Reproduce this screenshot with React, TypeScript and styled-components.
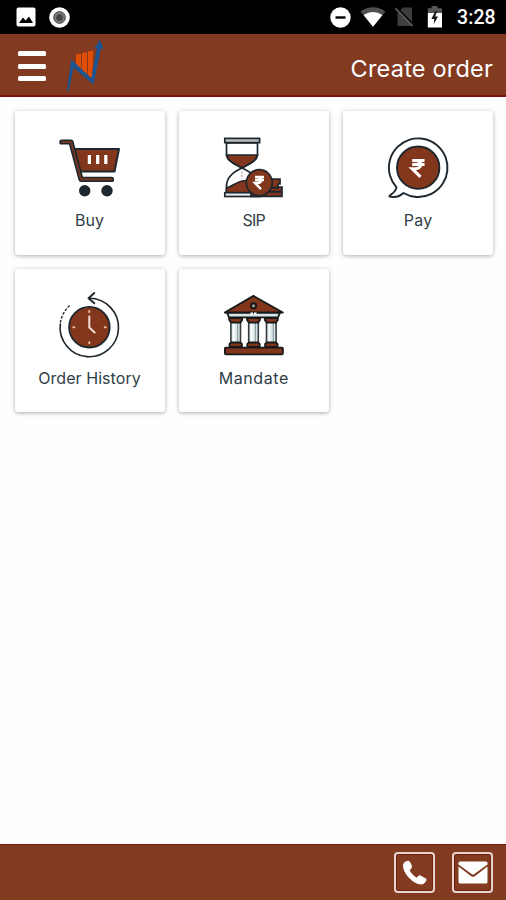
import React from "react";
import styled, { createGlobalStyle } from "styled-components";

const BROWN = "#823a20";
const RUST = "#82361b";
const INK = "#1d272d";

const GlobalStyle = createGlobalStyle`
  *, *::before, *::after { box-sizing: border-box; }
  body { margin: 0; background: #fefefe; }
`;

const Screen = styled.div`
  width: 506px;
  height: 900px;
  display: flex;
  flex-direction: column;
  overflow: hidden;
  background: #fefefe;
  font-family: Inter, "Open Sans", sans-serif;
`;

const StatusBar = styled.div`
  flex: none;
  height: 34px;
  padding: 0 10px 0 16px;
  display: flex;
  align-items: center;
  justify-content: space-between;
  background: #000;
`;

const StatusGroup = styled.div`
  display: flex;
  align-items: center;
`;

const StatusIcon = styled.svg<{ $gap: number }>`
  display: block;
  margin-right: ${(p) => p.$gap}px;
`;

const Clock = styled.span`
  width: 39px;
  color: #fff;
  font: 500 19.5px/34px Roboto, sans-serif;
  letter-spacing: 0.1px;
  white-space: nowrap;
  padding-top: 2px;
`;

const Header = styled.header`
  flex: none;
  height: 63px;
  padding: 0 13px 0 18px;
  display: flex;
  align-items: center;
  background: ${BROWN};
  border-bottom: 2px solid #77150f;
`;

const MenuButton = styled.button`
  width: 28px;
  height: 30px;
  margin-top: 3px;
  padding: 0;
  border: 0;
  background: none;
  display: flex;
  flex-direction: column;
  justify-content: space-between;
`;

const MenuLine = styled.span`
  height: 5px;
  border-radius: 1.5px;
  background: #fff;
`;

const Logo = styled.svg`
  display: block;
  margin-left: 20px;
`;

const Title = styled.h1`
  margin: 8px 0 0 auto;
  color: #fff;
  font-size: 23.5px;
  font-weight: 400;
  line-height: 32px;
  letter-spacing: 0.2px;
`;

const Grid = styled.main`
  flex: 1;
  display: grid;
  grid-template-columns: repeat(3, 150px);
  grid-template-rows: 144px 143px;
  align-content: start;
  column-gap: 14.3px;
  row-gap: 14px;
  padding: 14px 0 0 14.5px;
`;

const Card = styled.section`
  display: flex;
  flex-direction: column;
  align-items: center;
  padding-top: 26px;
  border-radius: 3px;
  background: #fff;
  box-shadow: 0 1px 4px rgba(0, 0, 0, 0.32);
`;

const CardIcon = styled.svg`
  display: block;
  flex: none;
  overflow: visible;
`;

const Label = styled.span<{ $spacing: number }>`
  margin-top: 11px;
  color: #304047;
  font-size: 16px;
  line-height: 24px;
  letter-spacing: ${(p) => p.$spacing}px;
`;

const Footer = styled.footer`
  flex: none;
  height: 56px;
  padding: 7px 13px 0 0;
  display: flex;
  justify-content: flex-end;
  gap: 17px;
  background: ${BROWN};
  border-top: 1px solid #74160f;
`;

const ContactButton = styled.button`
  width: 41px;
  height: 41px;
  padding: 0;
  border: 2px solid #e8d4cf;
  border-radius: 4px;
  background: ${BROWN};
  box-shadow: inset 0 0 0 1px #741d12;
  display: flex;
  align-items: center;
  justify-content: center;
`;

const RUPEE = "M0 1H12M0 5H12M0 1H3C10 1 10 9 3 9H0L8 17";

const CartArt = () => (
  <g strokeLinejoin="round" strokeLinecap="round">
    <path d="M14 12H59L54.5 34.5H20Z" fill={RUST} stroke={INK} strokeWidth="2" />
    <path d="M1.8 5H11L21 42.4H51.5" fill="none" stroke={INK} strokeWidth="5.2" />
    <path d="M1.8 5H11L21 42.4H51.5" fill="none" stroke="#713624" strokeWidth="2.1" />
    <path d="M29.4 19.5V25.3M37.7 19.5V25.3M45.8 19.5V25.3" stroke="#fff" strokeWidth="3.2" strokeLinecap="square" />
    <circle cx="24.7" cy="53.7" r="5.7" fill={INK} />
    <circle cx="47" cy="53.7" r="5.7" fill={INK} />
  </g>
);

const SipArt = () => (
  <g stroke={INK} strokeWidth="1.7">
    <path d="M2.5 6H33.5V17C33.5 24 25 27 18 31C11 27 2.5 24 2.5 17Z" fill="#fff" />
    <path d="M2.5 18H33.5C32.5 24 25 27 18 31C11 27 3.5 24 2.5 18Z" fill={RUST} />
    <path d="M18 31C9 35 2.5 40 2.5 49V56H34V48C34 40 27 35 18 31Z" fill="#fff" />
    <path d="M2.5 55V51C9 49 14 43.5 22 43.5L34 51V56H2.5Z" fill={RUST} />
    <path d="M18 34.5V42" stroke="#b5aca1" strokeDasharray="2 1.5" strokeWidth="1.3" />
    <rect x="0.8" y="1.4" width="34.8" height="4.2" fill="#b8bec1" />
    <rect x="0.8" y="55.7" width="35" height="3.8" fill="#e8edef" />
    <path d="M37 42H56V46.8H54V50H58V59.4H27V54H43V50H37Z" fill={RUST} />
    <path d="M43 50.8H55M45 54.8H58" strokeWidth="2" />
    <circle cx="35.3" cy="45.7" r="13" fill={RUST} />
    <path d={RUPEE} transform="translate(31 39.3) scale(.75)" fill="none" stroke="#fff" strokeWidth="3.2" />
  </g>
);

const PayArt = () => (
  <g stroke={INK} strokeWidth="1.9">
    <path
      d="M8.5 50.4A29.3 29.3 0 1 1 15.4 56C12 59.5 6 60.4 1.4 59.6C.5 58 7 57 8.5 50.4Z"
      fill="#fff"
      strokeLinejoin="round"
    />
    <circle cx="30.2" cy="30.7" r="21.2" fill={RUST} />
    <path d={RUPEE} transform="translate(24.2 22.4) scale(1.03)" fill="none" stroke="#fff" strokeWidth="3" />
  </g>
);

const HistoryArt = () => (
  <g fill="none" strokeLinecap="round" strokeLinejoin="round">
    <path d="M29.5 3.3A29.2 29.2 0 1 1 .3 29" stroke={INK} strokeWidth="1.6" />
    <path d="M.5 27A29.2 29.2 0 0 1 10.5 9.8" stroke={INK} strokeWidth="1.4" strokeDasharray="1.6 2.6" />
    <path d="M34.3-2L28.5 3.3L34.3 8.3" stroke={INK} strokeWidth="1.9" />
    <circle cx="29.4" cy="32.2" r="20.3" fill={RUST} stroke={INK} strokeWidth="1.8" />
    <path d="M29.3 21.5V32.5L34.7 37.5" stroke="#f2ded6" strokeWidth="2" />
    <path d="M29.3 16V17M29.3 47.3V48.3M13.3 32.2H14.3M44.7 32.2H45.7" stroke="#edbd9f" strokeWidth="2" />
  </g>
);

const MandateArt = () => (
  <g stroke="#17191b" strokeWidth="1.8" strokeLinejoin="round">
    <path d="M3 17.6H56L54 22.4H5Z" fill="#d9e6e8" />
    <path d="M29.5.9L58.8 17.5H.8Z" fill={RUST} />
    <circle cx="29.5" cy="10.8" r="2.6" fill="#a9998f" strokeWidth="2" />
    <path d="M26.5 18.3H32.5" stroke="#fff" strokeDasharray="2.5 1" />
    {[11.7, 29.5, 47.3].map((x) => (
      <g key={x} transform={`translate(${x} 0)`}>
        <rect x="-4.8" y="26" width="9.6" height="23" fill="#dce9eb" stroke="#343c40" strokeWidth="1.6" />
        <path d="M-1.9 28V47" stroke="#fff" strokeWidth="1.8" />
        <path d="M2 28V47" stroke="#8d9ea4" strokeWidth="1.2" />
        <path d="M-6.5 23.2H6.5V25L4.5 27.6H-4.5L-6.5 25Z" fill={RUST} />
        <path d="M-6.2 51.8V49L-4.4 47.5H4.4L6.2 49V51.8Z" fill={RUST} />
      </g>
    ))}
    <rect x="0.9" y="52.6" width="58" height="6.7" rx="1" fill={RUST} />
  </g>
);

const ACTIONS = [
  { label: "Buy", Art: CartArt, spacing: 0.1 },
  { label: "SIP", Art: SipArt, spacing: -0.7 },
  { label: "Pay", Art: PayArt, spacing: 0.2 },
  { label: "Order History", Art: HistoryArt, spacing: 0.07 },
  { label: "Mandate", Art: MandateArt, spacing: 0.55 },
];

export default function App() {
  return (
    <Screen>
      <GlobalStyle />
      <StatusBar>
        <StatusGroup>
          <StatusIcon $gap={13} width="20" height="20" viewBox="0 0 20 20">
            <rect x="0.5" y="0.5" width="19" height="19" rx="2" fill="#fff" />
            <path d="M3 16L7 10.5L9.5 13.5L13 9.5L17 16Z" fill="#000" />
          </StatusIcon>
          <StatusIcon $gap={0} width="21" height="21" viewBox="0 0 21 21">
            <circle cx="10.5" cy="10.5" r="10.3" fill="#fff" />
            <circle cx="10.5" cy="10.5" r="5.9" fill="#777" stroke="#555" strokeWidth="1" />
            <circle cx="10.5" cy="10.5" r="3.2" fill="#444" />
          </StatusIcon>
        </StatusGroup>
        <StatusGroup>
          <StatusIcon $gap={9} width="21" height="21" viewBox="0 0 21 21">
            <circle cx="10.5" cy="10.5" r="10.2" fill="#fff" />
            <path d="M5.5 10.5H15.5" stroke="#000" strokeWidth="2.4" />
          </StatusIcon>
          <StatusIcon $gap={9} width="26" height="20" viewBox="0 0 26 20">
            <path d="M.5 4.5Q13-3.8 25.5 4.5L13 19.8Z" fill="#505050" />
            <path d="M3.5 8Q13 1.8 22.5 8L13 19.8Z" fill="#fff" />
          </StatusIcon>
          <StatusIcon $gap={13} width="19" height="20" viewBox="0 0 19 20">
            <path d="M2.5 6L8 0.5H17V19H2.5Z" fill="#3d3d3d" />
            <path d="M1.8 1L18.5 18" stroke="#000" strokeWidth="2" />
            <path d="M.5 1.5L17.5 19" stroke="#575757" strokeWidth="1.8" />
          </StatusIcon>
          <StatusIcon $gap={14} width="16" height="22" viewBox="0 0 16 22">
            <path d="M4.5 0H10.5V2.3H15V7H.8V2.3H4.5Z" fill="#555" />
            <path d="M.8 7H15V21.5H.8Z" fill="#fff" />
            <path d="M8.3 5L4.4 13H7.2L6.7 18.2L11 10.4H8.2L10 5Z" fill="#161616" />
          </StatusIcon>
          <Clock>3:28</Clock>
        </StatusGroup>
      </StatusBar>

      <Header>
        <MenuButton aria-label="Menu">
          <MenuLine />
          <MenuLine />
          <MenuLine />
        </MenuButton>
        <Logo width="38" height="54" viewBox="66 38 38 54">
          <path
            d="M76 54.5L81 53.5V70L76 65Z M82 53L87 52V75L82 71Z M88 51.5L93.3 50.5L92 78L88 76Z"
            fill="#e04d05"
          />
          <path
            d="M67 91L71.2 59.5L91.3 78.2L97 48L94.6 48.4L99.8 39.5L103.5 49L100.8 48.4L93.5 84.5L73.4 67.5L68.8 91Z"
            fill="#195493"
          />
        </Logo>
        <Title>Create order</Title>
      </Header>

      <Grid>
        {ACTIONS.map(({ label, Art, spacing }) => (
          <Card key={label}>
            <CardIcon width="60" height="60" viewBox="0 0 60 60">
              <Art />
            </CardIcon>
            <Label $spacing={spacing}>{label}</Label>
          </Card>
        ))}
      </Grid>

      <Footer>
        <ContactButton aria-label="Call">
          <svg width="25" height="25" viewBox="0 0 25 25">
            <path
              d="M6.5 1L3 2.2C1 4 1 8 3.5 12.5C7 19 14.5 24.8 20.5 23.8C23 23 24.3 20.5 24 19L17.5 15.5L14.7 18C11.5 16.5 9 13.8 7.3 10.3L9.5 7.5C9.3 5 8.3 2.3 6.5 1Z"
              fill="#fff"
              stroke="#fff"
              strokeLinejoin="round"
            />
          </svg>
        </ContactButton>
        <ContactButton aria-label="Mail">
          <svg width="30" height="23" viewBox="0 0 30 23">
            <path d="M2 .5H28Q29.5.5 29.5 2V3.5L16 13.2Q15 14 14 13.2L.5 3.5V2Q.5.5 2 .5Z" fill="#fff" />
            <path d="M.5 5.5L13.2 15.2Q15 16.5 16.8 15.2L29.5 5.5V21Q29.5 22.5 28 22.5H2Q.5 22.5.5 21Z" fill="#fff" />
          </svg>
        </ContactButton>
      </Footer>
    </Screen>
  );
}
